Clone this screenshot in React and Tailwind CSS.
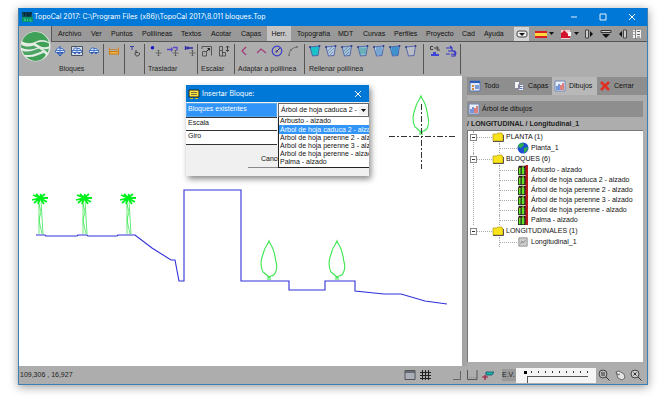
import React, { useState } from "react";
import clsx from "clsx";

const menus = [
  { title: "Archivo", width: "w-[33px]" },
  { title: "Ver", width: "w-[20px]" },
  { title: "Puntos", width: "w-[31px]" },
  { title: "Polilíneas", width: "w-[39px]" },
  { title: "Textos", width: "w-[30px]" },
  { title: "Acotar", width: "w-[30px]" },
  { title: "Capas", width: "w-[32px]" },
  { title: "Herr.", width: "w-[24px]" },
  { title: "Topografía", width: "w-[41px]" },
  { title: "MDT", width: "w-[25px]" },
  { title: "Curvas", width: "w-[31px]" },
  { title: "Perfiles", width: "w-[32px]" },
  { title: "Proyecto", width: "w-[36px]" },
  { title: "Cad", width: "w-[22px]" },
  { title: "Ayuda", width: "w-[32px]" },
];

const blocks = [
  "Arbusto - alzado",
  "Árbol de hoja caduca 2 - alzado",
  "Árbol de hoja perenne 2 - alzado",
  "Árbol de hoja perenne 3 - alzado",
  "Árbol de hoja perenne - alzado",
  "Palma - alzado",
];

const tree = [
  { title: "PLANTA (1)", icon: "globe", items: ["Planta_1"] },
  { title: "BLOQUES (6)", icon: "block", items: blocks },
  { title: "LONGITUDINALES (1)", icon: "profile", items: ["Longitudinal_1"] },
];

const Icon = ({ children, size = "size-3" }) => (
  <svg viewBox="0 0 12 12" className={clsx("shrink-0", size)} fill="none">
    {children}
  </svg>
);

const Car = ({ framed, lift }) => (
  <Icon>
    {framed && <path d="M.500 1.500h11v9H.500z" fill="#d4dbe6" stroke="#4a5568" />}
    <path
      d="M1.500 7.500V5.500l1-.5L3.500 3h2.500v4.500M6 3.500h2.500l1 1.500 1 .5v2H1.500M1.500 5.500h9"
      fill="#dceaff"
      stroke="#3c6cc0"
      strokeWidth=".9"
    />
    <path d="M3 8h2M7 8h2" stroke="#1f4eb0" strokeWidth="1.500" />
    {lift && <path d="M6 1v2M6 8v3M4.500 9.500 6 11l1.500-1.500" stroke="#2451c4" />}
  </Icon>
);

const Move = ({ kind }) => (
  <Icon>
    <path d="M8.500 5v6M5.500 8h6M7.500 6l1-1 1 1M7.500 10l1 1 1-1" stroke="#555" strokeWidth=".8" />
    {kind === 0 && <circle cx="2.500" cy="2.800" r="1.700" fill="#1414c8" />}
    {kind === 1 && <path d="M0 4.500h6M4.500 2.500v4M6 2.500h4v3" stroke="#5a48c8" strokeWidth="1.300" />}
    {kind === 2 && <path d="M1.500 1v4M1 3h8M4 1.500v3" stroke="#2b22a8" strokeWidth="1.300" />}
  </Icon>
);

const Fill = ({ fill, lines }) => (
  <Icon>
    <path d="M1 2l9.500-1L9 10.500 3.500 11z" fill={fill} stroke="#4a5fa8" strokeWidth=".9" />
    {lines === "h" && <path d="M2 4h7M3 6h6M3 8h6" stroke="#2e8a9a" strokeWidth=".7" />}
    {lines === "v" && <path d="M4 2v8M6 2v8M8 2v8" stroke="#2868b8" strokeWidth=".9" />}
    {lines === "d" && <path d="M3 6l4-4M4 8l5-5M5 10l3-3" stroke="#5078a8" strokeWidth=".6" />}
    <path d="M1 1v2M10.500 0v2" stroke="#333b88" strokeWidth="1.500" />
  </Icon>
);

const groups = [
  {
    label: "Bloques",
    box: "w-[53px] pl-[3px]",
    labelPad: "pl-[5px]",
    gap: "gap-[5px]",
    tools: [
      ["Insertar", <Car lift />],
      ["Editar", <Car framed />],
      ["Lista", <Car />],
    ],
  },
  {
    label: "",
    box: "w-[21px] pl-[4px]",
    gap: "gap-1",
    tools: [
      [
        "Medir",
        <Icon>
          <path d="M1.500 2.500v7M10.500 2.500v7" stroke="#d98213" />
          <path d="M1 4.500h10" stroke="#c88a40" />
          <path d="M1.500 6.500h9v2.500h-9z" fill="#f0b848" stroke="#c87a10" />
        </Icon>,
      ],
    ],
  },
  {
    label: "",
    box: "w-[20px] pl-[4px]",
    gap: "gap-1",
    tools: [
      [
        "Girar texto",
        <Icon>
          <path d="M1 1.500h4M3 1v4" stroke="#3a3f9c" />
          <path d="M7 7a2.200 2.200 0 1 0 3 .500M7 5v2.500h2" stroke="#333" strokeWidth=".9" />
        </Icon>,
      ],
    ],
  },
  {
    label: "Trasladar",
    box: "w-[53px] pl-[3px]",
    iconPad: "pl-[2px]",
    gap: "gap-[5px]",
    tools: [
      ["Mover", <Move kind={0} />],
      ["Mover grupo", <Move kind={1} />],
      ["Desplazar", <Move kind={2} />],
    ],
  },
  {
    label: "Escalar",
    box: "w-[37px] pl-[3px]",
    gap: "gap-[5px]",
    tools: [
      [
        "Escalar",
        <Icon>
          <path d="M1 4V1.500h9.500v9M1.500 6.500h4V11h-4z" stroke="#555" />
          <path d="M5.500 6.500l3-3M6.500 3.500h2v2" stroke="#222" />
        </Icon>,
      ],
      [
        "Escalar eje",
        <Icon>
          <path d="M1.500 1.500h3v4h-3zM1.500 5.500h3V11h-3zM4.500 7.500h3V11h-3z" stroke="#555" />
          <path d="M9.500 1v5M8 2.500 9.500 1 11 2.500M8 5l1.500 1.500L11 5" stroke="#222" strokeWidth=".8" />
        </Icon>,
      ],
    ],
  },
  {
    label: "Adaptar a polilínea",
    box: "w-[70px] pl-[3px]",
    iconPad: "pl-px",
    gap: "gap-[4px]",
    tools: [
      ["Ángulo", <Icon><path d="M7 2 3 6l4 4" stroke="#a03a78" strokeWidth="1.200" /></Icon>],
      ["Vértice", <Icon><path d="M2 8l4-4 5 4" stroke="#a03a78" strokeWidth="1.200" /></Icon>],
      [
        "Círculo",
        <Icon>
          <circle cx="6" cy="6" r="4.800" stroke="#3c3cc8" strokeWidth="1.200" />
          <path d="M6 6l3-3M5 6h1v1H5z" stroke="#2c2c90" />
        </Icon>,
      ],
      [
        "Arco",
        <Icon>
          <path d="M2 11C2 6 4 3 10 2" stroke="#666" strokeWidth=".9" />
          <path d="M1 9.500h2V11H1zM9 1h2v2H9zM3 4h2v2H3z" fill="#777" />
        </Icon>,
      ],
    ],
  },
  {
    label: "Rellenar polilínea",
    box: "w-[119px] pl-[4px]",
    gap: "gap-[4px]",
    tools: [
      ["Sólido", <Fill fill="#18c2c6" />],
      ["Claro", <Fill fill="#b4c8dc" lines="d" />],
      ["Diagonal", <Fill fill="#a4c0d4" lines="d" />],
      ["Horizontal", <Fill fill="#8cc4cc" lines="h" />],
      ["Vertical", <Fill fill="#b8dce8" lines="v" />],
      ["Denso", <Fill fill="#52b4dc" lines="v" />],
      ["Vacío", <Fill fill="#bcbcc4" />],
    ],
  },
  {
    label: "",
    box: "w-[37px] pl-[5px]",
    gap: "gap-[4px]",
    tools: [
      [
        "Cota",
        <Icon>
          <path d="M4 1.500H1.500v3H4M5 3h2M8 1v4h3M8 3h2" stroke="#333" strokeWidth=".9" />
          <path d="M2 11V9h2V7h3v2h3v2z" fill="#3d45d8" />
        </Icon>,
      ],
      [
        "Niveles",
        <Icon>
          <path d="M1 3h6v3M7 3l-2-2M3 6h7v3M6 9l5 .5M1 9h4M8 6l3 2-1 3H6" stroke="#3434c8" strokeWidth="1.200" />
        </Icon>,
      ],
    ],
  },
];

const TitleBar = () => (
  <header className="flex h-[18px] items-center bg-[#0078d7] pl-[3px] text-white">
    <svg viewBox="0 0 12 12" className="size-3">
      <path d="M0 1h10v10H0z" fill="#0c4d58" />
      <path d="M0 6h11v5H0z" fill="#0b9468" />
      <path d="M1 2h3M2.500 2v3M5 2h2v3H5zM8 2v3M8 2h2" stroke="#0a2236" fill="none" />
      <path d="M2 8h2M2 9.500h2M5.500 8v2M8 8v2h2" stroke="#38c890" fill="none" />
    </svg>
    <h1 className="font-['Inter','Open_Sans',sans-serif] text-[7px] leading-[10px] whitespace-nowrap">
      TopoCal 2017: C:\Program Files (x86)\TopoCal 2017\8.011 bloques.Top
    </h1>
    <div className="ml-auto flex gap-[17px] pr-[9px]">
      <button aria-label="Minimizar"><Icon><path d="M3 6h6" stroke="#fff" strokeWidth=".9" /></Icon></button>
      <button aria-label="Maximizar"><Icon><path d="M3 3h6v6H3z" stroke="#fff" strokeWidth=".9" /></Icon></button>
      <button aria-label="Cerrar ventana"><Icon><path d="M3 3l6 6M9 3l-6 6" stroke="#fff" strokeWidth="1" /></Icon></button>
    </div>
  </header>
);

const QuickBar = () => (
  <div className="ml-auto flex h-full items-center pr-[4px]">
    <button aria-label="Desplegar" className="flex h-[14px] w-[15px] items-center justify-center bg-[#d4d4d4]">
      <Icon>
        <rect x="1" y="3" width="10" height="6" rx="2" fill="#eee" stroke="#444" />
        <path d="M3 5h6L6 8z" fill="#111" />
      </Icon>
    </button>
    <button aria-label="Idioma" className="ml-[6px] flex items-center">
      <Icon>
        <path d="M0 3h12v7H0z" fill="#d91f26" />
        <path d="M0 5h12v3H0z" fill="#ffd83c" />
      </Icon>
      <svg viewBox="0 0 5 3" className="ml-[2px] h-[3px] w-[5px]"><path d="M0 0h5L2.500 3z" fill="#111" /></svg>
    </button>
    <button aria-label="Exportar PDF" className="ml-[6px] flex items-center">
      <Icon>
        <path d="M1 2h9v9H1z" fill="#f0d0d0" />
        <path d="M1 10V5l2-1 1-2 3 3 3 3v2z" fill="#d3122c" />
        <path d="M8 4h3v4H8z" fill="#fff" />
      </Icon>
      <svg viewBox="0 0 5 3" className="ml-[2px] h-[3px] w-[5px]"><path d="M0 0h5L2.500 3z" fill="#111" /></svg>
    </button>
    <button aria-label="Panel izquierdo" className="ml-[4px]">
      <Icon>
        <path d="M2.500 2h3v8h-3z" fill="#ccc" stroke="#444" />
        <path d="M7 3l3 3-3 3z" fill="#111" />
      </Icon>
    </button>
    <button aria-label="Panel inferior" className="ml-[5px]">
      <Icon>
        <path d="M1 2.500h10v2H1z" fill="#ccc" stroke="#333" />
        <path d="M2 6h8L6 10z" fill="#111" />
      </Icon>
    </button>
    <button aria-label="Panel derecho" className="ml-[4px]">
      <Icon>
        <path d="M7.500 2h3v8h-3z" fill="#ccc" stroke="#444" />
        <path d="M6 3L3 6l3 3z" fill="#111" />
      </Icon>
    </button>
    <button aria-label="Opciones" className="ml-[3px]">
      <Icon>
        <path d="M1.500 1.500h9v9h-9z" fill="#f2f2f2" stroke="#999" />
        <path d="M4.500 1v10" stroke="#666" strokeWidth=".8" />
        <path d="M6 3.500h3M6 6.500h3M6 9h3M2.500 3.500h1M2.500 6.500h1" stroke="#666" />
      </Icon>
    </button>
  </div>
);

const Ribbon = () => (
  <div className="flex bg-[#adadad]">
    <div className="flex w-[32px] shrink-0 justify-center pt-[5px]">
      <svg viewBox="0 0 30 30" className="size-[31px]">
        <circle cx="15" cy="15" r="14.500" fill="#e4ece4" />
        <path d="M2 10C5 3 10 1 15 1s11 3 13 10c-4-3-8-3-12-1S7 13 2 10z" fill="#3fa058" />
        <path d="M15 12c4-2 9-2 13 0v3c-3 1-6 1-8 0z" fill="#3fa058" />
        <path d="M1 13c4 3 9 2 12 1l4 2c-4 2-10 3-16 0z" fill="#4aa564" />
        <path d="M2 19c6 2 11 0 16-2l4 2c-5 2-10 5-18 4z" fill="#4aa564" />
        <path d="M22 17c2 1 4 1 6 0l-1 4z" fill="#4aa564" />
        <path d="M6 25c7 1 12-2 17-4l2 2c-2 4-6 6-10 6s-7-2-9-4z" fill="#3fa058" />
      </svg>
    </div>
    <div className="min-w-0 grow">
      <nav className="flex h-[16px] items-center border-b border-l border-[#555] bg-[#999] text-[7px] leading-[10px]">
        {menus.map((item) => (
          <button
            key={item.title}
            className={clsx(
              "h-[15px] shrink-0 whitespace-nowrap",
              item.width,
              item.title === "Herr." ? "bg-[#c4c4c4] text-center" : "pl-[6px] text-left"
            )}
          >
            {item.title}
          </button>
        ))}
        <QuickBar />
      </nav>
      <div className="flex h-[34px] py-[2px]">
        {groups.map((group, index) => (
          <div
            key={index}
            className={clsx("flex shrink-0 flex-col justify-between border-r border-[#555]", group.box)}
          >
            <div className={clsx("flex h-[14px] items-center", group.gap, group.iconPad)}>
              {group.tools.map(([title, icon]) => (
                <button key={title} aria-label={title}>
                  {icon}
                </button>
              ))}
            </div>
            <span className={clsx("text-[7px] leading-[10px] whitespace-nowrap text-[#222]", group.labelPad)}>
              {group.label}
            </span>
          </div>
        ))}
      </div>
    </div>
  </div>
);

const Palm = ({ x }) => (
  <g transform={`translate(${x} 118)`} stroke="#00e01c" fill="none">
    <path d="M-1 6v34M1 6l2 34M-1 10l2 8-2 8 3 14" strokeWidth=".6" />
    <path
      d="M0 4l-7-3M0 4l-4-4M0 4l1-4M0 4l5-4M0 4l8 0M0 4l-8 2M0 4l-6 5M0 4l7 4M0 4l4 6M0 4l-2 6"
      strokeWidth="1.800"
      stroke="#00f01c"
    />
  </g>
);

const Leafy = ({ x, y }) => (
  <path
    transform={`translate(${x} ${y})`}
    d="M0 0C-1 3-4 6-5 10c-1 4-3 7-3 12 0 4 1 7 2 9 2 1 3 3 5 4l1 1 2-1c2 0 4-2 5-5 1-3 1-6 0-9-1-5-1-8-3-13C3 5 1 3 0 0zM-1 35v4M1 36v3"
    fill="none"
    stroke="#3ce650"
    strokeWidth="1.100"
  />
);

const Drawing = () => (
  <svg viewBox="0 0 443 290" preserveAspectRatio="xMinYMin meet" className="w-full">
    <Palm x={21} />
    <Palm x={65} />
    <Palm x={109} />
    <Leafy x={250} y={165} />
    <Leafy x={318} y={165} />
    <Leafy x={402} y={20} />
    <path
      d="M17 159h9l1 1h31l1-1h9l1 1h29l1-1h17l17 13 19 12h4l4 21h5V114h57v91h48v9h36v-9h30v10l29 3h17l24 7 22 3"
      fill="none"
      stroke="#3030d8"
      strokeWidth="1.100"
    />
    <path d="M370 60.500h66" stroke="#333" strokeDasharray="6 2 2 2" />
    <path d="M402.500 28v65" stroke="#333" strokeDasharray="6 2 2 2" />
  </svg>
);

const InsertDialog = () => {
  const [block, setBlock] = useState(blocks[1]);
  return (
    <section
      role="dialog"
      aria-label="Insertar Bloque"
      className="absolute top-[9px] left-[167px] h-[91px] w-[183px] bg-[#f0f0f0] shadow-[2px_3px_6px_#0007]"
    >
      <div className="flex h-[17px] items-center bg-[#0078d7] px-[2px] text-white">
        <Icon>
          <path d="M1 2h10v7H1z" fill="#ffe23c" stroke="#222" />
          <path d="M3 4.500h6M3 6.500h6" stroke="#554" strokeWidth=".8" />
          <path d="M2 10.500h3M7 10.500h3" stroke="#d8c020" />
        </Icon>
        <h2 className="ml-[2px] font-['Inter','Open_Sans',sans-serif] text-[7px] leading-[10px]">
          Insertar Bloque:
        </h2>
        <button aria-label="Cerrar diálogo" className="ml-auto pr-[3px]">
          <Icon><path d="M3 3l6 6M9 3l-6 6" stroke="#fff" /></Icon>
        </button>
      </div>
      <div className="grid w-[91px] text-[7px] leading-[10px]">
        <label htmlFor="block" className="mt-px h-[14px] border border-[#5aa8f0] bg-[#3094f8] px-px text-white">
          Bloques existentes
        </label>
        <label htmlFor="scale" className="h-[14px] border-y border-[#333] bg-white px-[2px]">Escala</label>
        <label htmlFor="turn" className="h-[14px] border-b border-[#333] bg-white px-[2px]">Giro</label>
      </div>
      <div className="mt-[6px] ml-[62px] flex w-[60px]">
        <button className="h-[17px] w-full border-r border-b border-[#888] pl-[13px] text-left text-[7px] leading-[10px]">
          Cancelar
        </button>
      </div>
      <input id="scale" aria-label="Escala" className="absolute top-[32px] right-0 h-[14px] w-[91px] border border-[#333] bg-white" />
      <input id="turn" aria-label="Giro" className="absolute top-[46px] right-0 h-[14px] w-[91px] border border-[#333] bg-white" />
      <div className="absolute top-[18px] right-0 w-[91px] text-[7px] leading-[10px]">
        <button
          id="block"
          aria-haspopup="listbox"
          className="flex h-[14px] w-full items-center border border-[#666] bg-white pl-[2px]"
        >
          <span className="grow text-left whitespace-nowrap">{block.replace("alzado", "")}</span>
          <span className="flex h-[9px] w-[9px] shrink-0 items-center justify-center bg-[#f0f0f0]">
            <svg viewBox="0 0 5 3" className="h-[3px] w-[5px]"><path d="M0 0h5L2.500 3z" fill="#111" /></svg>
          </span>
        </button>
        <ul role="listbox" aria-label="Bloques" className="border-b border-l border-[#222] bg-white pb-px">
          {blocks.map((item) => (
            <li
              key={item}
              role="option"
              aria-selected={item === block}
              onClick={() => setBlock(item)}
              className={clsx(
                "overflow-hidden pl-px whitespace-nowrap",
                item === block ? "bg-[#3094f8] leading-[9px] text-white" : "leading-[8px]"
              )}
            >
              {item}
            </li>
          ))}
        </ul>
      </div>
    </section>
  );
};

const ChartIcon = () => (
  <Icon>
    <path d="M1 1h10v10H1z" fill="#e9eef8" stroke="#7088b8" />
    <path d="M3 10V6M5 10V4" stroke="#3868c8" strokeWidth="1.300" />
    <path d="M7 10V5M9 10V3" stroke="#d8483c" strokeWidth="1.300" />
  </Icon>
);

const tabs = [
  {
    title: "Todo",
    width: "w-[44px]",
    icon: (
      <Icon>
        <path d="M1 1h10v10H1z" fill="#dfe9fa" stroke="#5878b0" />
        <path d="M1 2h10" stroke="#2f5cb8" strokeWidth="2" />
        <path d="M3 5h2v2H3zM3 8h2v2H3z" fill="#d88a34" />
        <path d="M6 5h4v4H6z" fill="#7c9cd8" />
      </Icon>
    ),
  },
  {
    title: "Capas",
    width: "w-[41px]",
    icon: (
      <Icon>
        <path d="M1.500 1.500h5v7h-5zM5.500 4.500h5v6h-5z" fill="#f4f4f4" stroke="#889" />
        <path d="M6.500 6.500h3M6.500 8.500h3" stroke="#4a78c0" />
      </Icon>
    ),
  },
  { title: "Dibujos", width: "w-[45px]", icon: <ChartIcon /> },
  {
    title: "Cerrar",
    width: "w-[40px]",
    icon: <Icon><path d="M2 2l8 8M10 2l-8 8" stroke="#e03024" strokeWidth="2.600" /></Icon>,
  },
];

const leafIcons = {
  globe: (
    <Icon>
      <circle cx="6" cy="6" r="5.500" fill="#1c4fd0" />
      <path d="M2 2l4-1 1 2-3 3-3-1zM7 6l4-1-1 4-3 2z" fill="#2fae4c" />
    </Icon>
  ),
  block: (
    <Icon size="mx-px size-[10px]">
      <path d="M1 1h10v11H0V4z" fill="#222" />
      <path d="M1 11V5l2-1v7zM4.500 11V4l1.500-2 1.500 2v7z" fill="#62e22a" />
      <path d="M1 4h2M5 3l2-2" stroke="#f4ec30" />
      <path d="M9 0h3v12H9z" fill="#b8181c" />
    </Icon>
  ),
  profile: (
    <Icon size="mx-px size-[10px]">
      <path d="M1 1h10v10H1z" fill="#ccc" stroke="#888" />
      <path d="M3 8l2-3 1 2 3-3" stroke="#666" strokeWidth=".8" />
    </Icon>
  ),
};

const SidePanel = () => {
  const [active, setActive] = useState("Dibujos");
  const [closed, setClosed] = useState([]);
  const toggle = (title) =>
    setClosed(closed.includes(title) ? closed.filter((c) => c !== title) : [...closed, title]);

  return (
    <aside className="flex w-[180px] shrink-0 flex-col text-[7px] leading-[10px]">
      <div className="mt-px flex h-[18px] bg-[#8e8e8e]">
        {tabs.map((tab) => (
          <button
            key={tab.title}
            onClick={() => setActive(tab.title)}
            className={clsx(
              "flex shrink-0 items-center gap-[3px] pl-[2px]",
              tab.width,
              active === tab.title && "bg-[#b8b8b8]"
            )}
          >
            {tab.icon}
            {tab.title}
          </button>
        ))}
      </div>
      <div className="mt-[6px] mr-[4px] flex h-[16px] items-center gap-[2px] bg-[#8e8e8e] pl-px">
        <ChartIcon />
        <h2>Árbol de dibujos</h2>
      </div>
      <p className="h-[13px] pt-[2px] font-bold text-[#222]">/ LONGITUDINAL / Longitudinal_1</p>
      <ul className="mr-[4px] mb-[4px] grow border-t border-l border-[#777] bg-white">
        {tree.map((group, index) => (
          <li
            key={group.title}
            className={clsx("ml-[5px]", index < 2 && "border-l border-dotted border-[#aaa]", index === 2 && "pl-px")}
          >
            <div className="flex h-[12px] items-center">
              <button
                aria-label={group.title}
                aria-expanded={!closed.includes(group.title)}
                onClick={() => toggle(group.title)}
                className="-ml-[4px] flex size-[7px] items-center justify-center border border-[#888] bg-white"
              >
                <span className="h-px w-[3px] bg-[#333]" />
              </button>
              <span className="w-[15px] border-t border-dotted border-[#aaa]" />
              <Icon>
                <path d="M1 3h4l1-1h4v1.500h1V10H1z" fill="#f8e31c" stroke="#b89410" strokeWidth=".7" />
                <path d="M1 10.500h10.500V4" stroke="#333" strokeWidth=".8" />
              </Icon>
              <span className="ml-[2px]">{group.title}</span>
            </div>
            {!closed.includes(group.title) && (
              <ul className="ml-[25px]">
                {group.items.map((item) => (
                  <li key={item} className="flex h-[10px] items-center border-l border-dotted border-[#aaa]">
                    <span className="w-[17px] border-t border-dotted border-[#aaa]" />
                    {leafIcons[group.icon]}
                    <span className="ml-[2px] whitespace-nowrap">{item}</span>
                  </li>
                ))}
              </ul>
            )}
          </li>
        ))}
      </ul>
    </aside>
  );
};

const StatusBar = () => (
  <footer className="flex h-[18px] items-center bg-[#adadad] pr-[5px] pl-[1px] text-[7px] leading-[10px] text-[#222]">
    <output>109,306 , 16,927</output>
    <div className="ml-auto flex items-center">
      <button aria-label="Ventana">
        <Icon>
          <path d="M1 1.500h10v9H1z" fill="#aab0b8" stroke="#555" />
          <path d="M1 3h10" stroke="#556" strokeWidth="1.500" />
        </Icon>
      </button>
      <button aria-label="Rejilla" className="ml-[3px]">
        <Icon><path d="M3.500 1v10M6.500 1v10M9.500 1v10M1 3.500h11M1 6.500h11M1 9.500h11" stroke="#222" /></Icon>
      </button>
      <button aria-label="Orto" className="ml-[19px]">
        <Icon><path d="M10.500 2v8.500H3" stroke="#666" /></Icon>
      </button>
      <button aria-label="Ejes" className="ml-[4px]">
        <Icon>
          <path d="M1.500 1v9.500H11V1" stroke="#555" />
          <path d="M3 8.500h7" stroke="#888" strokeDasharray="1 1" />
        </Icon>
      </button>
      <button aria-label="Referencia" className="ml-[4px]">
        <Icon>
          <path d="M4 3h8l-2 3H4z" fill="#18b8a8" stroke="#14506c" strokeWidth=".8" />
          <path d="M0 8h6M3 6v5" stroke="#a01838" strokeWidth="1.200" />
        </Icon>
      </button>
      <label htmlFor="zoom" className="ml-[8px] flex h-[12px] w-[14px] items-center bg-[#999]">E.V.</label>
      <div className="flex h-[15px] w-[80px] flex-col bg-[#f4f4f4] px-[8px] pt-[3px]">
        <input
          id="zoom"
          type="range"
          min="0"
          max="10"
          defaultValue="0"
          className="h-[4px] w-full appearance-none bg-[repeating-linear-gradient(90deg,#333_0px,#333_1px,transparent_1px,transparent_7px)] bg-[length:100%_2px] bg-no-repeat [&::-webkit-slider-thumb]:size-[3px] [&::-webkit-slider-thumb]:appearance-none [&::-webkit-slider-thumb]:bg-black"
        />
        <span className="mt-px ml-[3px] h-[7px] border-t border-l border-[#555]" />
      </div>
      <button aria-label="Zoom ventana" className="ml-[2px]">
        <Icon>
          <circle cx="5" cy="5" r="4" fill="#bbb" stroke="#444" />
          <path d="M8 8l3.500 3.500M3 4h4M3 6h4" stroke="#333" />
        </Icon>
      </button>
      <button aria-label="Encuadre" className="ml-[4px]">
        <Icon>
          <path d="M2 3l3-1 5 3 1 4-3 2-4-2z" fill="#e4e4e4" stroke="#555" strokeWidth=".8" />
          <path d="M2 3l2 3 2-1" stroke="#666" />
        </Icon>
      </button>
      <button aria-label="Zoom extensión" className="ml-[4px]">
        <Icon>
          <circle cx="5" cy="5" r="4" fill="#ccc" stroke="#444" />
          <path d="M8 8l3.500 3.500M3.500 3.500l3 3M6.500 3.500l-3 3" stroke="#333" />
        </Icon>
      </button>
    </div>
  </footer>
);

const App = () => (
  <div className="flex min-h-screen bg-white pt-[8px] pr-[23px] pb-[19px] pl-[18px] font-['Liberation_Sans',Arial,sans-serif] text-[#111]">
    <main className="flex min-w-0 grow flex-col border-x border-b border-[#3d7fb0] bg-[#adadad] shadow-[0_2px_9px_#0006]">
      <TitleBar />
      <Ribbon />
      <div className="flex grow">
        <div className="relative min-w-0 grow bg-white">
          <Drawing />
          <InsertDialog />
        </div>
        <div className="w-[5px] shrink-0 bg-[#a4a4a4]" />
        <SidePanel />
      </div>
      <StatusBar />
    </main>
  </div>
);

export default App;
